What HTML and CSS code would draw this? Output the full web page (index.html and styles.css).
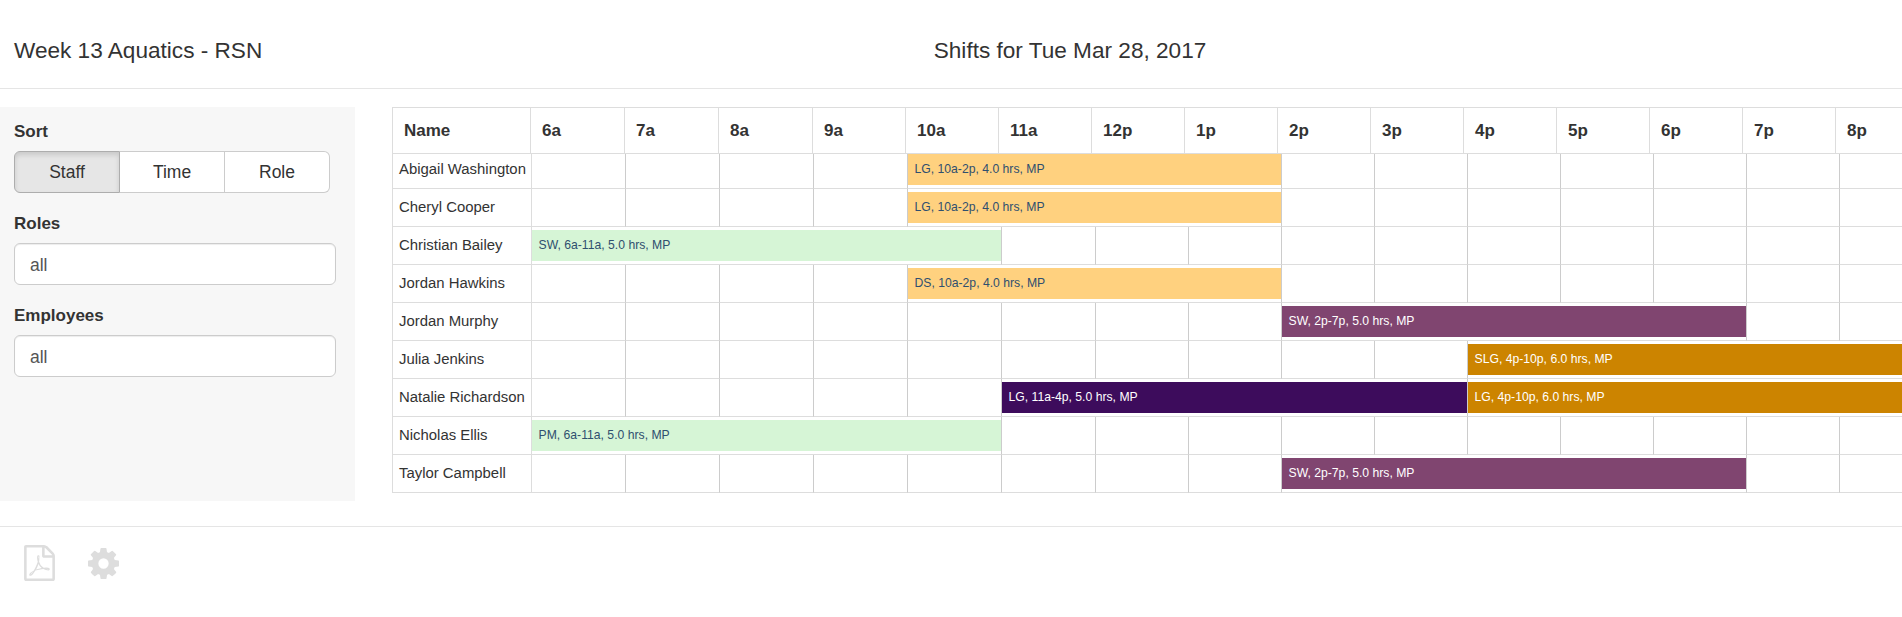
FILE: index.html
```html
<!DOCTYPE html>
<html lang="en">
<head>
    <meta charset="UTF-8">
    <meta name="viewport" content="width=device-width, initial-scale=1.0">
    <title>Shifts for Tue Mar 28, 2017</title>
    <link rel="stylesheet" href="styles.css">
</head>
<body>
    <header class="top-bar">
        <h1 class="schedule-name">Week 13 Aquatics - RSN</h1>
        <h2 class="day-title">Shifts for Tue Mar 28, 2017</h2>
    </header>

    <main class="content">
        <aside class="sidebar">
            <div class="field">
                <div class="field-label">Sort</div>
                <div class="btn-group">
                    <button type="button" class="btn active">Staff</button>
                    <button type="button" class="btn">Time</button>
                    <button type="button" class="btn">Role</button>
                </div>
            </div>
            <div class="field">
                <label class="field-label" for="roles">Roles</label>
                <input type="text" id="roles" class="filter" value="all">
            </div>
            <div class="field">
                <label class="field-label" for="employees">Employees</label>
                <input type="text" id="employees" class="filter" value="all">
            </div>
        </aside>

        <section class="schedule">
            <div class="hours">
                <div class="hour">Name</div>
                <div class="hour">6a</div>
                <div class="hour">7a</div>
                <div class="hour">8a</div>
                <div class="hour">9a</div>
                <div class="hour">10a</div>
                <div class="hour">11a</div>
                <div class="hour">12p</div>
                <div class="hour">1p</div>
                <div class="hour">2p</div>
                <div class="hour">3p</div>
                <div class="hour">4p</div>
                <div class="hour">5p</div>
                <div class="hour">6p</div>
                <div class="hour">7p</div>
                <div class="hour">8p</div>
            </div>

            <div class="staff-row first">
                <div class="name">Abigail Washington</div>
                <div class="slot"></div><div class="slot"></div><div class="slot"></div><div class="slot"></div>
                <div class="slot span-4"><div class="shift orange">LG, 10a-2p, 4.0 hrs, MP</div></div>
                <div class="slot"></div><div class="slot"></div><div class="slot"></div><div class="slot"></div><div class="slot"></div><div class="slot"></div><div class="slot"></div>
            </div>
            <div class="staff-row">
                <div class="name">Cheryl Cooper</div>
                <div class="slot"></div><div class="slot"></div><div class="slot"></div><div class="slot"></div>
                <div class="slot span-4"><div class="shift orange">LG, 10a-2p, 4.0 hrs, MP</div></div>
                <div class="slot"></div><div class="slot"></div><div class="slot"></div><div class="slot"></div><div class="slot"></div><div class="slot"></div><div class="slot"></div>
            </div>
            <div class="staff-row">
                <div class="name">Christian Bailey</div>
                <div class="slot span-5"><div class="shift green">SW, 6a-11a, 5.0 hrs, MP</div></div>
                <div class="slot"></div><div class="slot"></div><div class="slot"></div><div class="slot"></div><div class="slot"></div><div class="slot"></div><div class="slot"></div><div class="slot"></div><div class="slot"></div><div class="slot"></div>
            </div>
            <div class="staff-row">
                <div class="name">Jordan Hawkins</div>
                <div class="slot"></div><div class="slot"></div><div class="slot"></div><div class="slot"></div>
                <div class="slot span-4"><div class="shift orange">DS, 10a-2p, 4.0 hrs, MP</div></div>
                <div class="slot"></div><div class="slot"></div><div class="slot"></div><div class="slot"></div><div class="slot"></div><div class="slot"></div><div class="slot"></div>
            </div>
            <div class="staff-row">
                <div class="name">Jordan Murphy</div>
                <div class="slot"></div><div class="slot"></div><div class="slot"></div><div class="slot"></div><div class="slot"></div><div class="slot"></div><div class="slot"></div><div class="slot"></div>
                <div class="slot span-5"><div class="shift plum">SW, 2p-7p, 5.0 hrs, MP</div></div>
                <div class="slot"></div><div class="slot"></div>
            </div>
            <div class="staff-row">
                <div class="name">Julia Jenkins</div>
                <div class="slot"></div><div class="slot"></div><div class="slot"></div><div class="slot"></div><div class="slot"></div><div class="slot"></div><div class="slot"></div><div class="slot"></div><div class="slot"></div><div class="slot"></div>
                <div class="slot span-5"><div class="shift amber">SLG, 4p-10p, 6.0 hrs, MP</div></div>
            </div>
            <div class="staff-row">
                <div class="name">Natalie Richardson</div>
                <div class="slot"></div><div class="slot"></div><div class="slot"></div><div class="slot"></div><div class="slot"></div>
                <div class="slot span-5"><div class="shift violet">LG, 11a-4p, 5.0 hrs, MP</div></div>
                <div class="slot span-5"><div class="shift amber">LG, 4p-10p, 6.0 hrs, MP</div></div>
            </div>
            <div class="staff-row">
                <div class="name">Nicholas Ellis</div>
                <div class="slot span-5"><div class="shift green">PM, 6a-11a, 5.0 hrs, MP</div></div>
                <div class="slot"></div><div class="slot"></div><div class="slot"></div><div class="slot"></div><div class="slot"></div><div class="slot"></div><div class="slot"></div><div class="slot"></div><div class="slot"></div><div class="slot"></div>
            </div>
            <div class="staff-row">
                <div class="name">Taylor Campbell</div>
                <div class="slot"></div><div class="slot"></div><div class="slot"></div><div class="slot"></div><div class="slot"></div><div class="slot"></div><div class="slot"></div><div class="slot"></div>
                <div class="slot span-5"><div class="shift plum">SW, 2p-7p, 5.0 hrs, MP</div></div>
                <div class="slot"></div><div class="slot"></div>
            </div>
        </section>
    </main>

    <footer class="tools">
        <svg class="tool-pdf" viewBox="128 0 1536 1792" aria-label="Export PDF"><path d="M1596 380q28 28 48 76t20 88v1152q0 40-28 68t-68 28h-1344q-40 0-68-28t-28-68v-1600q0-40 28-68t68-28h896q40 0 88 20t76 48zm-444-244v376h376q-10-29-22-41l-313-313q-12-12-41-22zm384 1528v-1024h-416q-40 0-68-28t-28-68v-416h-768v1536h1280zm-514-593q33 26 84 56 59-7 117-7 147 0 177 49 16 22 2 52 0 1-1 2l-2 2v1q-6 38-71 38-48 0-115-20t-130-53q-221 24-392 83-153 262-242 262-15 0-28-7l-24-12q-1-1-6-5-10-10-6-36 9-40 56-91.500t132-96.500q14-9 23 6 2 2 2 4 52-85 107-197 68-136 104-262-24-82-30.500-159.500t6.500-127.500q11-40 42-40h22q23 0 35 15 18 21 9 68-2 6-4 8 1 3 1 8v30q-2 123-14 192 55 164 146 238zm-576 411q52-24 137-158-51 40-87.500 84t-49.500 74zm398-920q-15 42-2 132 1-7 7-44 0-3 7-43 1-4 4-8-1-1-1-2-1-2-1-3-1-22-13-36 0 1-1 2v2zm-124 661q135-54 284-81-2-1-13-9.500t-16-13.500q-76-67-127-176-27 86-83 197-30 56-45 83zm646-16q-24-24-140-24 76 28 124 28 14 0 18-1 0-1-2-3z"/></svg>
        <svg class="tool-cog" viewBox="0 0 1536 1536" aria-label="Settings"><path d="M1024 768q0-106-75-181t-181-75-181 75-75 181 75 181 181 75 181-75 75-181zm512-109v222q0 12-8 23t-20 13l-185 28q-19 54-39 91 35 50 107 138 10 12 10 25t-9 23q-27 37-99 108t-94 71q-12 0-26-9l-138-108q-44 23-91 38-16 136-29 186-7 28-36 28h-222q-14 0-24.500-8.500t-11.500-21.500l-28-184q-49-16-90-37l-141 107q-10 9-25 9-14 0-25-11-126-114-165-168-7-10-7-23 0-12 8-23 15-21 51-66.500t54-70.500q-27-50-41-99l-183-27q-13-2-21-12.500t-8-23.500v-222q0-12 8-23t19-13l186-28q14-46 39-92-40-57-107-138-10-12-10-24 0-10 9-23 26-36 98.500-107.500t94.500-71.500q13 0 26 10l138 107q44-23 91-38 16-136 29-186 7-28 36-28h222q14 0 24.500 8.500t11.500 21.500l28 184q49 16 90 37l142-107q9-9 24-9 13 0 25 10 129 119 165 170 7 8 7 22 0 12-8 23-15 21-51 66.500t-54 70.500q26 50 41 98l183 28q13 2 21 12.500t8 23.500z"/></svg>
    </footer>
</body>
</html>
```

FILE: styles.css
```css
html, body {
    overflow: hidden;
}
body {
    font-family: "Liberation Sans", Arial, sans-serif;
    background-color: white;
    color: #333;
    margin: 0;
    padding: 0;
}
.top-bar {
    display: grid;
    grid-template-columns: 238px 1664px;
    height: 88px;
    border-bottom: 1px solid #e5e5e5;
}
.schedule-name, .day-title {
    margin: 0;
    padding-top: 38px;
    font-size: 22.6px;
    font-weight: normal;
    line-height: 26px;
    white-space: nowrap;
}
.schedule-name {
    padding-left: 14px;
}
.day-title {
    text-align: center;
}
.content {
    display: flex;
    align-items: flex-start;
    margin-top: 18px;
}
.sidebar {
    flex: 0 0 355px;
    box-sizing: border-box;
    height: 394px;
    padding: 13px 19px 0 14px;
    background-color: #f7f7f7;
}
.field {
    margin-bottom: 19px;
}
.field-label {
    display: block;
    margin-bottom: 7px;
    font-size: 17px;
    font-weight: bold;
    line-height: 24px;
}
.btn-group {
    display: grid;
    grid-template-columns: 106px 105px 105px;
    width: 316px;
}
.btn {
    height: 42px;
    margin: 0;
    padding: 0;
    font-family: inherit;
    font-size: 17.5px;
    color: #333;
    background-color: white;
    border: 1px solid #ccc;
    border-left: none;
}
.btn:first-child {
    border-left: 1px solid #ccc;
    border-radius: 6px 0 0 6px;
}
.btn:last-child {
    border-radius: 0 6px 6px 0;
}
.btn.active {
    background-color: #e6e6e6;
    border-color: #adadad;
    box-shadow: inset 0 3px 5px rgba(0, 0, 0, 0.125);
}
.filter {
    display: block;
    width: 100%;
    height: 42px;
    box-sizing: border-box;
    padding: 2px 15px 0;
    font-family: inherit;
    font-size: 17.5px;
    color: #555;
    background-color: white;
    border: 1px solid #ccc;
    border-radius: 6px;
    box-shadow: inset 0 1px 1px rgba(0, 0, 0, 0.075);
}
.schedule {
    flex: 1;
    min-width: 0;
    margin-left: 37px;
    overflow: hidden;
    border-left: 1px solid #ddd;
    border-top: 1px solid #ddd;
}
.hours, .staff-row {
    display: grid;
    width: 1540px;
}
.hours {
    grid-template-columns: 138px repeat(3, 94px) repeat(12, 93px);
    height: 46px;
}
.hour {
    display: flex;
    align-items: center;
    box-sizing: border-box;
    padding-left: 11px;
    font-size: 17px;
    font-weight: bold;
    border-right: 1px solid #ddd;
    border-bottom: 1px solid #ddd;
}
.staff-row {
    grid-template-columns: 139px repeat(6, 94px) repeat(9, 93px);
    height: 38px;
}
.staff-row.first {
    height: 35px;
}
.name {
    display: flex;
    align-items: center;
    box-sizing: border-box;
    padding: 0 0 2px 6px;
    font-size: 14.9px;
    white-space: nowrap;
    border-right: 1px solid #ddd;
    border-bottom: 1px solid #ddd;
}
.first .name {
    padding-bottom: 4px;
}
.slot {
    box-sizing: border-box;
    padding: 3px 0;
    border-right: 1px solid #ccc;
    border-bottom: 1px solid #ddd;
}
.first .slot {
    padding-top: 0;
}
.span-4 {
    grid-column: span 4;
}
.span-5 {
    grid-column: span 5;
}
.shift {
    height: 31px;
    padding-left: 6.5px;
    font-size: 12.2px;
    line-height: 31px;
    white-space: nowrap;
}
.orange {
    background-color: #ffd17f;
    color: #2f4f6f;
}
.green {
    background-color: #d6f5d6;
    color: #2f4f6f;
}
.plum {
    background-color: #804570;
    color: white;
}
.amber {
    background-color: #cc8400;
    color: white;
}
.violet {
    background-color: #3d0c5c;
    color: white;
}
.tools {
    display: flex;
    align-items: center;
    gap: 33px;
    height: 73px;
    margin-top: 25px;
    padding-left: 24px;
    border-top: 1px solid #e5e5e5;
}
.tools svg {
    fill: #ddd;
}
.tool-pdf {
    width: 31px;
    height: 36px;
    margin-top: -1px;
}
.tool-cog {
    width: 31px;
    height: 31px;
    margin-top: -1px;
}
```
